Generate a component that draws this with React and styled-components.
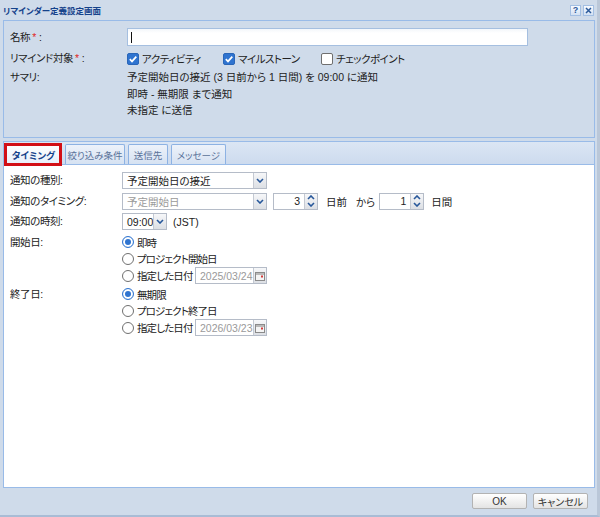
import React from 'react';
import styled, { createGlobalStyle, css } from 'styled-components';

const GlobalStyle = createGlobalStyle`
  html, body {
    margin: 0;
    padding: 0;
  }
  body {
    background: #cfdbea;
    font-family: "Liberation Sans", "Noto Sans CJK JP", sans-serif;
    font-size: 10.5px;
    color: #222;
    font-feature-settings: "palt";
  }
  * {
    box-sizing: border-box;
  }
`;

const Window = styled.div`
  width: 600px;
  height: 517px;
  display: flex;
  flex-direction: column;
  background: #cfdbea;
  border-right: 3px solid #bac7d8;
  border-bottom: 2px solid #a9bcd5;
`;

const TitleBar = styled.div`
  height: 20px;
  flex: none;
  display: flex;
  align-items: center;
  justify-content: space-between;
  padding: 0 3px 0 3px;
  font-weight: bold;
  font-size: 8.5px;
  color: #15428b;
`;

const ToolButtons = styled.div`
  display: flex;
  gap: 2px;
`;

const ToolButton = styled.div`
  width: 11px;
  height: 11px;
  display: flex;
  align-items: center;
  justify-content: center;
  border: 1px solid #a3bfe3;
  background: linear-gradient(#f7faff, #d3e1f3);
  color: #2b5a9a;
  font-size: 9px;
  font-weight: bold;
  font-family: "Liberation Sans", sans-serif;
`;

const TopPanel = styled.div`
  flex: none;
  height: 118px;
  margin: 0 2px 0 3px;
  border: 1px solid #99bbe8;
  padding: 7px 6px;
`;

const Row = styled.div`
  display: grid;
  grid-template-columns: ${p => p.$label}px 1fr;
  align-items: ${p => (p.$top ? 'start' : 'center')};
  min-height: ${p => p.$h || 17}px;
  margin-bottom: ${p => p.$gap || 0}px;
`;

const Label = styled.div`
  color: #222;
  line-height: ${p => p.$lh || 17}px;
  white-space: nowrap;
  letter-spacing: -0.4px;
`;

const Req = styled.span`
  color: #e0271f;
  margin: 0 3px 0 2px;
`;

const TextInput = styled.div`
  width: 401px;
  height: 18px;
  border: 1px solid #a5bfe0;
  background: linear-gradient(#f3f6fa, #fff 4px);
  display: flex;
  align-items: center;
  padding-left: 3px;
`;

const Caret = styled.span`
  width: 1px;
  height: 11px;
  background: #111;
`;

const CheckGroup = styled.div`
  display: grid;
  grid-template-columns: 96px 98px auto;
  align-items: center;
`;

const Choice = styled.label`
  display: flex;
  align-items: center;
  gap: 3px;
  height: ${p => p.$h || 16}px;
  white-space: nowrap;
`;

const ChoiceText = styled.span`
  width: ${p => (p.$w ? `${p.$w}px` : 'auto')};
  flex: none;
  letter-spacing: ${p => p.$ls}px;
`;

const Box = styled.span`
  width: 12px;
  height: 12px;
  border-radius: 2px;
  display: flex;
  align-items: center;
  justify-content: center;
  flex: none;
  ${p =>
    p.$on
      ? css`
          background: #2f74d0;
          border: 1px solid #2a66b8;
        `
      : css`
          background: #fff;
          border: 1px solid #6f6f6f;
        `}
`;

const Circle = styled.span`
  width: 12px;
  height: 12px;
  border-radius: 50%;
  flex: none;
  background: #fff;
  ${p =>
    p.$on
      ? css`
          border: 1px solid #2f74d0;
          box-shadow: inset 0 0 0 2px #fff, inset 0 0 0 6px #2f74d0;
        `
      : css`
          border: 1px solid #707070;
        `}
`;

const Summary = styled.div`
  line-height: 16.5px;
  color: #222;
`;

const TabPanel = styled.div`
  flex: none;
  height: 347px;
  margin: 3px 2px 0 3px;
  border: 1px solid #99bbe8;
  display: flex;
  flex-direction: column;
  background: #fff;
`;

const TabStrip = styled.div`
  height: 23px;
  flex: none;
  display: flex;
  align-items: flex-end;
  gap: 3px;
  padding-left: 1px;
  background: linear-gradient(#dbe6f4, #cddbee);
  border-bottom: 1px solid #99bbe8;
`;

const Tab = styled.div`
  position: relative;
  width: ${p => p.$w}px;
  height: 20px;
  display: flex;
  align-items: center;
  justify-content: center;
  border: 1px solid #8db2e3;
  border-bottom: none;
  border-radius: 2px 2px 0 0;
  white-space: nowrap;
  font-size: 9.5px;
  ${p =>
    p.$active
      ? css`
          background: linear-gradient(#ffffff, #e6eefa);
          color: #15428b;
          font-weight: bold;
          height: 21px;
          margin-bottom: -1px;
          &::after {
            content: '';
            position: absolute;
            left: -2px;
            right: -1px;
            top: -2px;
            bottom: -1px;
            border: 3px solid #d20f16;
          }
        `
      : css`
          background: linear-gradient(#edf2fa, #d6e2f2);
          color: #5a7299;
        `}
`;

const TabBody = styled.div`
  flex: 1;
  padding: 7px 6px;
`;

const Inline = styled.div`
  display: flex;
  align-items: center;
  gap: ${p => p.$gap || 0}px;
  white-space: nowrap;
`;

const Stack = styled.div`
  display: flex;
  flex-direction: column;
`;

const Field = styled.div`
  width: ${p => p.$w}px;
  height: 17px;
  display: flex;
  border: 1px solid #b5bcc8;
  background: #fff;
  flex: none;
`;

const FieldText = styled.div`
  flex: 1;
  display: flex;
  align-items: center;
  justify-content: ${p => (p.$right ? 'flex-end' : 'flex-start')};
  padding: 0 4px;
  color: ${p => (p.$muted ? '#9a9a9a' : '#222')};
  white-space: nowrap;
  overflow: hidden;
`;

const Trigger = styled.div`
  width: 13px;
  flex: none;
  display: flex;
  flex-direction: ${p => (p.$spin ? 'column' : 'row')};
  align-items: center;
  justify-content: ${p => (p.$spin ? 'space-evenly' : 'center')};
  border-left: 1px solid #c4c9d2;
  background: linear-gradient(#f6f7f9, #dcdfe4);
`;

const Unit = styled.span`
  margin: 0 ${p => p.$r || 0}px 0 ${p => p.$l || 0}px;
`;

const Footer = styled.div`
  flex: 1;
  display: flex;
  justify-content: flex-end;
  align-items: flex-start;
  gap: 6px;
  padding: 5px 9px 0 0;
`;

const Button = styled.button`
  width: 55px;
  height: 16px;
  padding: 0;
  border: 1px solid #b3b3b3;
  border-radius: 2px;
  background: linear-gradient(#ffffff, #e4e4e4);
  font: inherit;
  font-size: 10px;
  color: #333;
  display: flex;
  align-items: center;
  justify-content: center;
`;

const Chevron = ({ up }) => (
  <svg width="8" height="5" viewBox="0 0 8 5">
    <path
      d={up ? 'M1 4 L4 1 L7 4' : 'M1 1 L4 4 L7 1'}
      fill="none"
      stroke="#27579a"
      strokeWidth="1.6"
    />
  </svg>
);

const CalendarIcon = () => (
  <svg width="10" height="10" viewBox="0 0 10 10">
    <rect x="0.5" y="1.5" width="9" height="8" fill="#f4f4f4" stroke="#8a8a8a" />
    <rect x="1" y="2" width="8" height="2" fill="#b9b9b9" />
    <rect x="6" y="4.5" width="2" height="2" fill="#d23a3a" />
  </svg>
);

const Check = () => (
  <svg width="10" height="10" viewBox="0 0 10 10">
    <path d="M1.8 5.2 L4 7.4 L8.3 2.6" fill="none" stroke="#fff" strokeWidth="1.7" />
  </svg>
);

const Select = ({ w, value, muted }) => (
  <Field $w={w}>
    <FieldText $muted={muted}>{value}</FieldText>
    <Trigger>
      <Chevron />
    </Trigger>
  </Field>
);

const Spinner = ({ value }) => (
  <Field $w={45}>
    <FieldText $right>{value}</FieldText>
    <Trigger $spin>
      <Chevron up />
      <Chevron />
    </Trigger>
  </Field>
);

const DateField = ({ value }) => (
  <Field $w={72}>
    <FieldText $muted>{value}</FieldText>
    <Trigger>
      <CalendarIcon />
    </Trigger>
  </Field>
);

const CheckItem = ({ on, children }) => (
  <Choice $h={14}>
    <Box $on={on}>{on && <Check />}</Box>
    <ChoiceText $ls={-0.5}>{children}</ChoiceText>
  </Choice>
);

const RadioItem = ({ on, children, h, w, extra }) => (
  <Choice $h={h || 16.5}>
    <Circle $on={on} />
    <ChoiceText $w={w} $ls={-0.9}>
      {children}
    </ChoiceText>
    {extra}
  </Choice>
);

const DateGroup = ({ first, second, date }) => (
  <Stack>
    <RadioItem on>{first}</RadioItem>
    <RadioItem>{second}</RadioItem>
    <RadioItem h={17} w={55} extra={<DateField value={date} />}>
      指定した日付
    </RadioItem>
  </Stack>
);

const tabs = [
  { name: 'タイミング', w: 57, active: true },
  { name: '絞り込み条件', w: 60 },
  { name: '送信先', w: 40 },
  { name: 'メッセージ', w: 55 },
];

export default function App() {
  return (
    <>
      <GlobalStyle />
      <Window>
        <TitleBar>
          <span>リマインダー定義設定画面</span>
          <ToolButtons>
            <ToolButton>?</ToolButton>
            <ToolButton>
              <svg width="7" height="7" viewBox="0 0 7 7">
                <path d="M1 1 L6 6 M6 1 L1 6" stroke="#2b5a9a" strokeWidth="1.5" />
              </svg>
            </ToolButton>
          </ToolButtons>
        </TitleBar>

        <TopPanel>
          <Row $label={117} $h={18} $gap={4}>
            <Label>
              名称<Req>*</Req>:
            </Label>
            <TextInput>
              <Caret />
            </TextInput>
          </Row>
          <Row $label={117} $h={14} $gap={2}>
            <Label>
              リマインド対象<Req>*</Req>:
            </Label>
            <CheckGroup>
              <CheckItem on>アクティビティ</CheckItem>
              <CheckItem on>マイルストーン</CheckItem>
              <CheckItem>チェックポイント</CheckItem>
            </CheckGroup>
          </Row>
          <Row $label={117} $top>
            <Label $lh={16.5}>サマリ:</Label>
            <Summary>
              <div>予定開始日の接近 (3 日前から 1 日間) を 09:00 に通知</div>
              <div>即時 - 無期限 まで通知</div>
              <div>未指定 に送信</div>
            </Summary>
          </Row>
        </TopPanel>

        <TabPanel>
          <TabStrip>
            {tabs.map(t => (
              <Tab key={t.name} $w={t.w} $active={t.active}>
                {t.name}
              </Tab>
            ))}
          </TabStrip>
          <TabBody>
            <Row $label={112} $gap={3.5}>
              <Label>通知の種別:</Label>
              <Select w={145} value="予定開始日の接近" />
            </Row>
            <Row $label={112} $gap={3.5}>
              <Label>通知のタイミング:</Label>
              <Inline>
                <Select w={145} value="予定開始日" muted />
                <Unit $l={6} />
                <Spinner value="3" />
                <Unit $l={8}>日前</Unit>
                <Unit $l={9} $r={4}>から</Unit>
                <Spinner value="1" />
                <Unit $l={7}>日間</Unit>
              </Inline>
            </Row>
            <Row $label={112} $gap={4}>
              <Label>通知の時刻:</Label>
              <Inline $gap={6}>
                <Select w={45} value="09:00" />
                <span>(JST)</span>
              </Inline>
            </Row>
            <Row $label={112} $top $gap={2}>
              <Label $lh={16.5}>開始日:</Label>
              <DateGroup first="即時" second="プロジェクト開始日" date="2025/03/24" />
            </Row>
            <Row $label={112} $top>
              <Label $lh={16.5}>終了日:</Label>
              <DateGroup first="無期限" second="プロジェクト終了日" date="2026/03/23" />
            </Row>
          </TabBody>
        </TabPanel>

        <Footer>
          <Button>OK</Button>
          <Button>キャンセル</Button>
        </Footer>
      </Window>
    </>
  );
}
